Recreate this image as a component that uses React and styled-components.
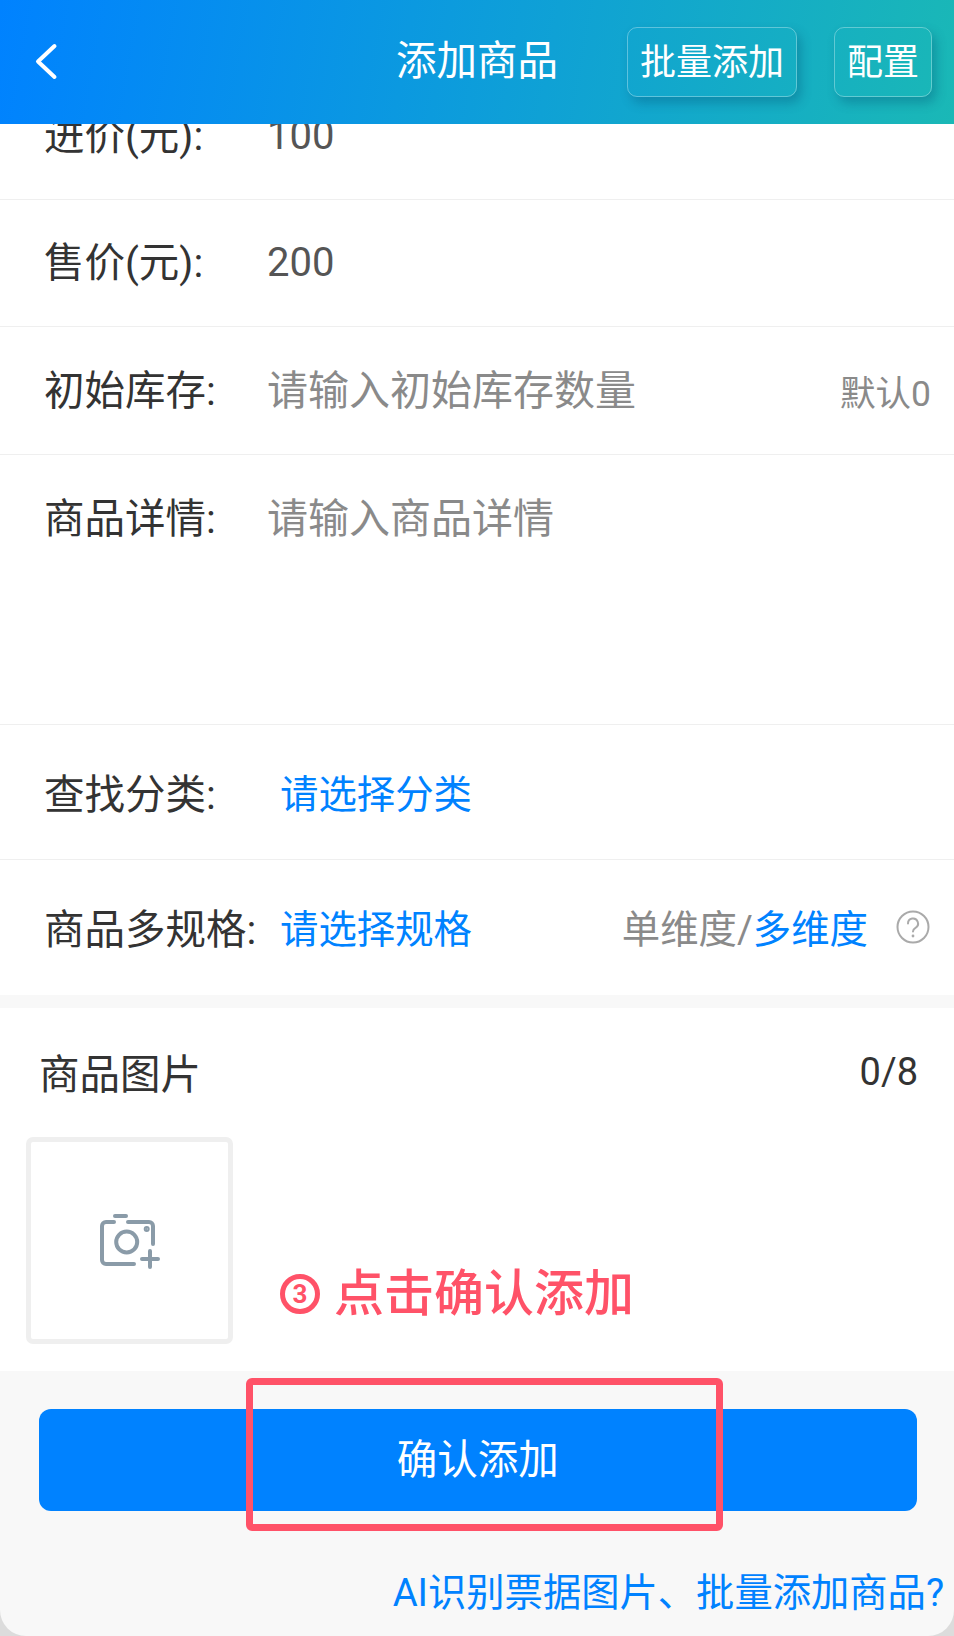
import React from "react";
import styled, { createGlobalStyle } from "styled-components";

const Global = createGlobalStyle`
  html, body { margin: 0; padding: 0; background: #fff; }
  * { box-sizing: border-box; }
`;
const FONT = `Roboto, "Noto Sans CJK SC", sans-serif`;

const Page = styled.div`
  position: relative;
  width: 954px;
  height: 1636px;
  display: flex;
  flex-direction: column;
  overflow: hidden;
  background: #dcdcdc;
  font-family: ${FONT};
  color: #333;
`;
const Header = styled.header`
  position: relative;
  z-index: 2;
  flex: 0 0 124px;
  display: flex;
  align-items: center;
  justify-content: space-between;
  padding: 0 22px 0 34px;
  background: linear-gradient(100deg, #0082ff 0%, #1ab8b6 100%);
  color: #fff;
`;
const Back = styled.svg`
  width: 26px;
  height: 40px;
`;
const Title = styled.h1`
  position: absolute;
  left: 0;
  right: 0;
  top: 36px;
  margin: 0;
  text-align: center;
  font-size: 40.5px;
  font-weight: 400;
  line-height: 50px;
`;
const Actions = styled.div`
  display: flex;
  gap: 37px;
`;
const HeadButton = styled.div`
  height: 70px;
  padding: 0 12px 6px;
  display: flex;
  align-items: center;
  font-size: 36px;
  border: 1px solid rgba(255, 255, 255, 0.32);
  border-radius: 10px;
  box-shadow: 4px 6px 11px rgba(0, 70, 110, 0.32);
`;
const Scroll = styled.main`
  flex: 1;
  min-height: 0;
  overflow: hidden;
  display: flex;
  flex-direction: column;
  background: #fff;
`;
const Rows = styled.div`
  margin-top: -52px;
`;
const Row = styled.div`
  height: ${(p) => p.$h || 128}px;
  display: flex;
  align-items: ${(p) => (p.$top ? "flex-start" : "center")};
  padding: ${(p) => p.$pt || 0}px 24px 0 44px;
  border-bottom: 1px solid ${(p) => (p.$last ? "transparent" : "#efefef")};
  font-size: 40px;
  line-height: 50px;
`;
const Label = styled.span`
  flex: 0 0 ${(p) => p.$w || 223}px;
  color: #333;
  font-size: 40.5px;
  white-space: nowrap;
`;
const Value = styled.span`
  flex: 1;
  color: ${(p) => (p.$ph ? "#8a8a8a" : "#555")};
  font-size: ${(p) => (p.$ph ? 41 : 40)}px;
  white-space: nowrap;
`;
const Pick = styled.span`
  flex: 1;
  color: #0082ff;
  font-size: 38.4px;
  margin-left: ${(p) => p.$ml || 0}px;
`;
const Hint = styled.span`
  font-size: 35.5px;
  color: #8a8a8a;
  margin: 7px -1px 0 0;
`;
const Dim = styled.span`
  font-size: 38.4px;
  color: #8a8a8a;
  white-space: nowrap;
`;
const Blue = styled.span`
  color: #0082ff;
`;
const Help = styled.svg`
  width: 34px;
  height: 34px;
  margin: -6px 0 0 28px;
`;
const Band = styled.div`
  height: 13px;
  background: #f8f8f8;
`;
const Images = styled.section`
  flex: 1;
  padding: 0 36px 0 26px;
`;
const ImagesHead = styled.div`
  display: flex;
  justify-content: space-between;
  align-items: center;
  height: 82px;
  margin-top: 23px;
  padding-left: 13px;
  font-size: 38px;
  line-height: 50px;
`;
const ImagesTitle = styled.span`
  font-size: 40.5px;
  padding-top: 6px;
`;
const Upload = styled.div`
  width: 207px;
  height: 207px;
  margin-top: 24px;
  display: flex;
  align-items: center;
  justify-content: center;
  border: 5px solid #efefef;
  border-radius: 7px;
`;
const Camera = styled.svg`
  width: 60px;
  height: 55px;
  margin: 1px 0 0 1px;
`;
const Footer = styled.footer`
  flex: 0 0 265px;
  background: #f8f8f8;
  padding: 38px 37px 0 38.5px;
  border-radius: 0 0 26px 26px;
`;
const Confirm = styled.div`
  height: 102px;
  padding-bottom: 8px;
  display: flex;
  align-items: center;
  justify-content: center;
  background: #0082ff;
  border-radius: 12px;
  color: #fff;
  font-size: 40.5px;
`;
const AiLink = styled.div`
  margin: 51px -27px 0 0;
  text-align: right;
  color: #0082ff;
  font-size: 38.3px;
  white-space: nowrap;
`;
const Note = styled.div`
  position: absolute;
  left: 280px;
  top: 1264px;
  display: flex;
  align-items: center;
  gap: 14px;
  color: #ff5268;
  font-size: 50px;
  font-weight: 500;
  line-height: 60px;
  white-space: nowrap;
`;
const NoteStep = styled.span`
  width: 40px;
  height: 40px;
  display: flex;
  align-items: center;
  justify-content: center;
  border: 5px solid #ff5268;
  border-radius: 50%;
  font-size: 26px;
  font-weight: 700;
  line-height: 1;
`;
const Highlight = styled.div`
  position: absolute;
  left: 246px;
  top: 1378px;
  width: 477px;
  height: 153px;
  border: 7.5px solid #ff5268;
  border-radius: 6px;
`;

export default function App() {
  return (
    <Page>
      <Global />
      <Header>
        <Back viewBox="0 0 26 40" fill="none">
          <path d="M20.5 4 L4 19.5 L20.5 35" stroke="#fff" strokeWidth="4" strokeLinecap="round" strokeLinejoin="round" />
        </Back>
        <Title>添加商品</Title>
        <Actions>
          <HeadButton>批量添加</HeadButton>
          <HeadButton>配置</HeadButton>
        </Actions>
      </Header>
      <Scroll>
        <Rows>
          <Row><Label>进价(元):</Label><Value>100</Value></Row>
          <Row $h={127}><Label>售价(元):</Label><Value>200</Value></Row>
          <Row><Label>初始库存:</Label><Value $ph>请输入初始库存数量</Value><Hint>默认0</Hint></Row>
          <Row $h={270} $top $pt={39}><Label>商品详情:</Label><Value $ph>请输入商品详情</Value></Row>
          <Row $h={135} $pt={6}><Label>查找分类:</Label><Pick $ml={13}>请选择分类</Pick></Row>
          <Row $h={135} $pt={6} $last>
            <Label $w={238}>商品多规格:</Label>
            <Pick $ml={-2}>请选择规格</Pick>
            <Dim>单维度/<Blue>多维度</Blue></Dim>
            <Help viewBox="0 0 34 34" fill="none">
              <circle cx="17" cy="17" r="15.5" stroke="#aaa" strokeWidth="2" />
              <path d="M12 13.5 a5 5 0 1 1 7.5 4.3 c-1.7 1-2.5 1.9-2.5 3.7" stroke="#aaa" strokeWidth="2" strokeLinecap="round" />
              <circle cx="17" cy="26" r="1.4" fill="#aaa" />
            </Help>
          </Row>
        </Rows>
        <Band />
        <Images>
          <ImagesHead><ImagesTitle>商品图片</ImagesTitle><span>0/8</span></ImagesHead>
          <Upload>
            <Camera viewBox="0 0 60 55" fill="none" stroke="#8a9ba8" strokeWidth="4" strokeLinecap="round">
              <path d="M14 8 H6 a4 4 0 0 0-4 4 V46 a4 4 0 0 0 4 4 H34" />
              <path d="M28 8 H49 a4 4 0 0 1 4 4 V30" />
              <path d="M15 2 H26" />
              <circle cx="26.7" cy="28" r="10.5" />
              <circle cx="46.7" cy="15" r="1" fill="#8a9ba8" />
              <path d="M42 45 H58 M50 37 V53" />
            </Camera>
          </Upload>
        </Images>
      </Scroll>
      <Footer>
        <Confirm>确认添加</Confirm>
        <AiLink>AI识别票据图片、批量添加商品?</AiLink>
      </Footer>
      <Note><NoteStep>3</NoteStep>点击确认添加</Note>
      <Highlight />
    </Page>
  );
}
